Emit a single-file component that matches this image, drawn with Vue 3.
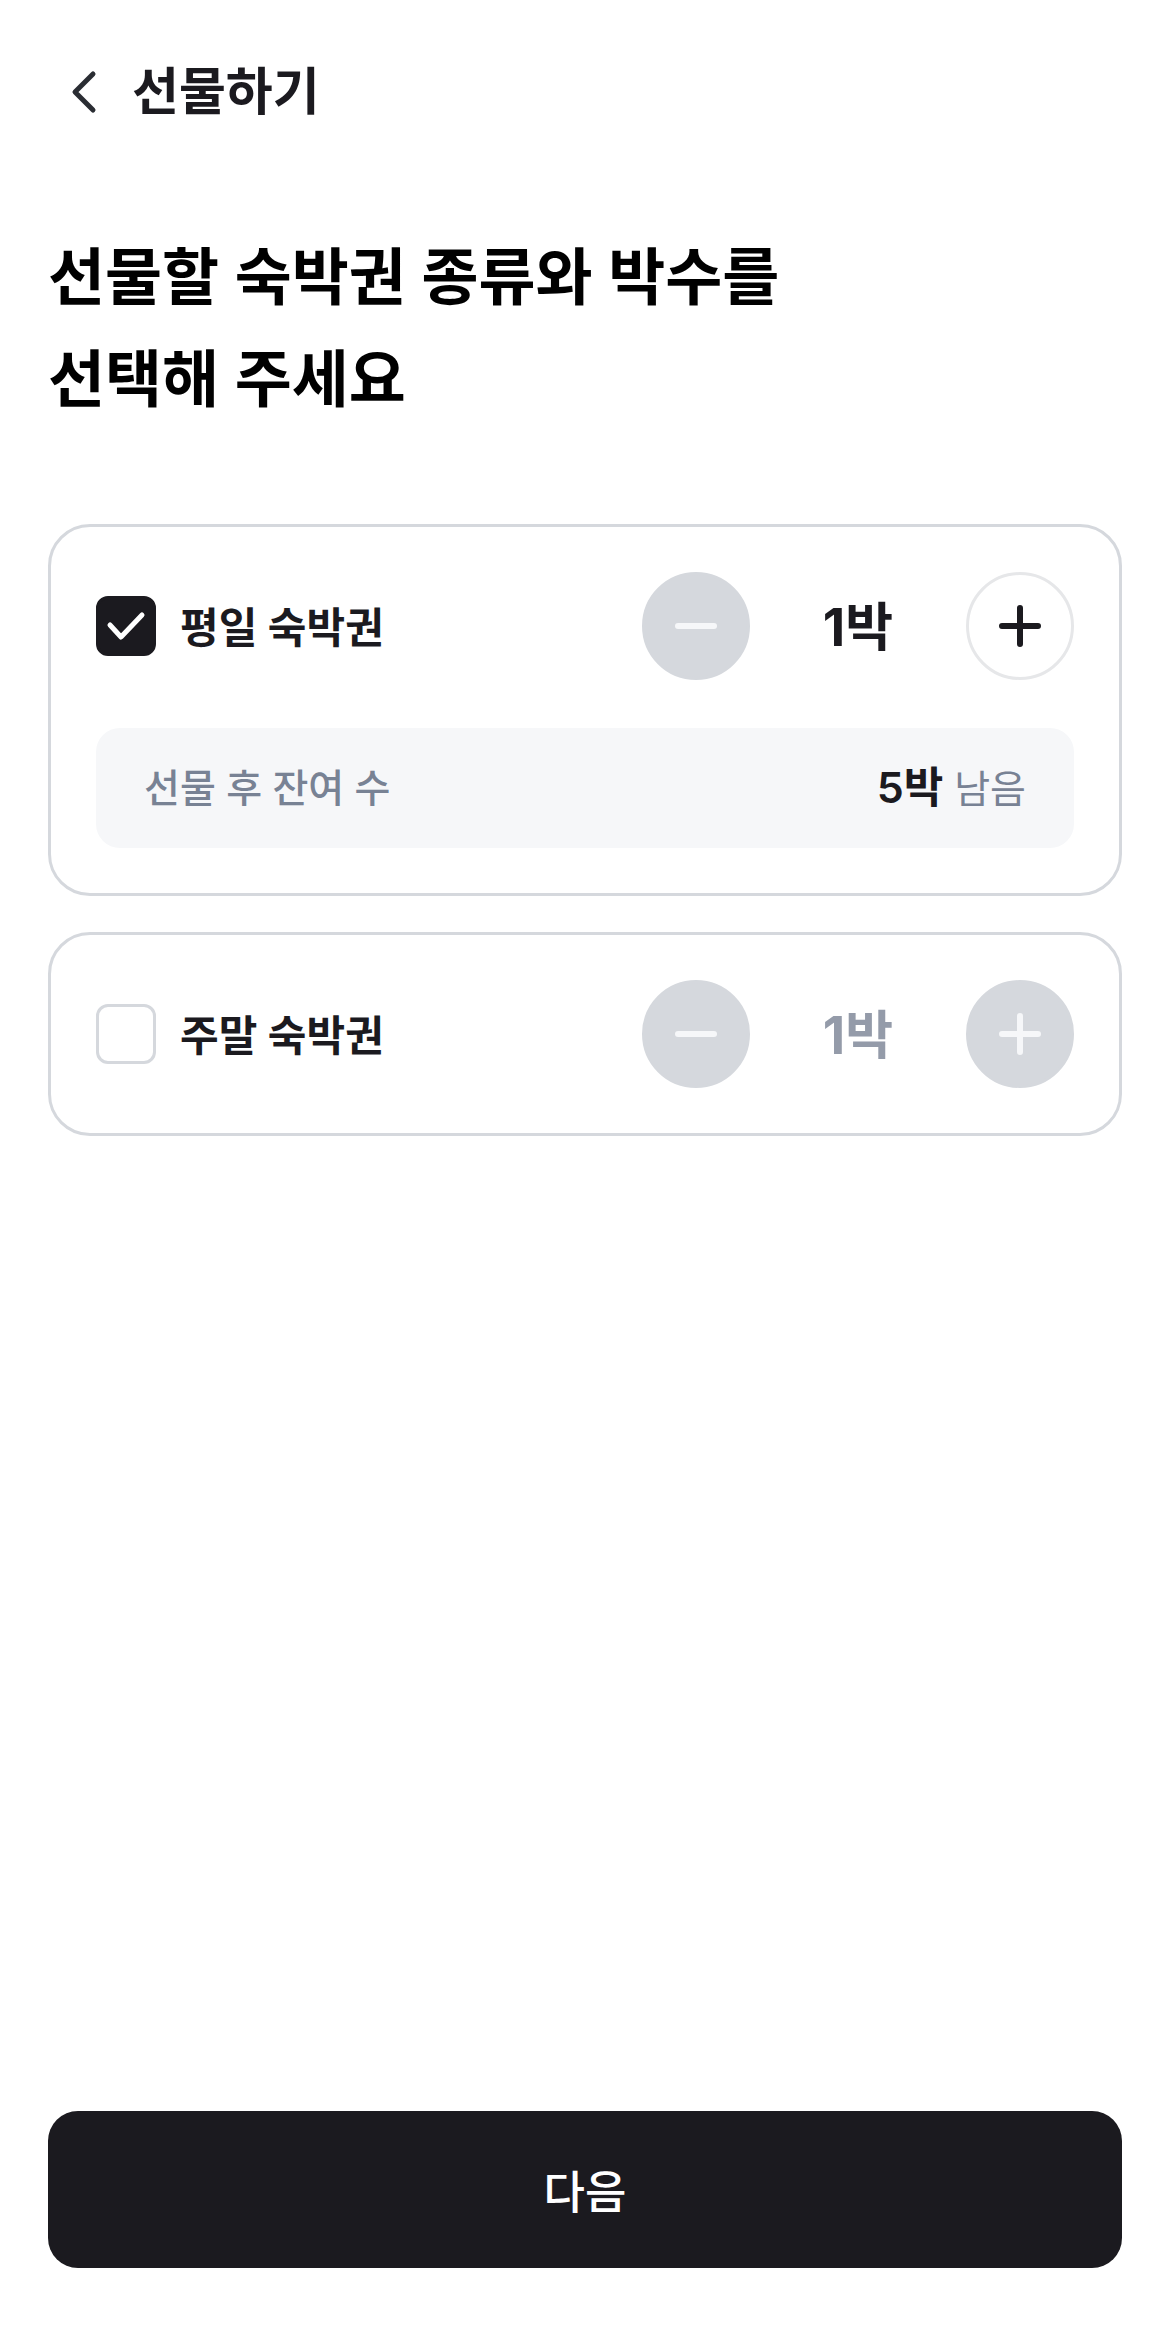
<script setup>
import { ref } from 'vue';

const tickets = ref([
    { id: 'weekday', name: '평일 숙박권', checked: true, count: 1, total: 6 },
    { id: 'weekend', name: '주말 숙박권', checked: false, count: 1, total: 4 },
]);

const canMinus = (ticket) => ticket.checked && ticket.count > 1;
const canPlus = (ticket) => ticket.checked && ticket.count < ticket.total;
</script>

<template>
    <div class="page">
        <header class="top-bar">
            <button type="button" class="back-btn" aria-label="뒤로">
                <svg viewBox="0 0 72 72" fill="none">
                    <path d="M45 18L27 36L45 54" />
                </svg>
            </button>
            <span class="top-title">선물하기</span>
        </header>

        <main class="content">
            <h1>선물할 숙박권 종류와 박수를<br>선택해 주세요</h1>
            <section v-for="ticket in tickets" :key="ticket.id" class="card">
                <div class="card-row">
                    <span class="check">
                        <input :id="ticket.id" v-model="ticket.checked" type="checkbox">
                        <svg v-if="ticket.checked" viewBox="0 0 60 60" fill="none">
                            <path d="M14 29L25 41L46 19" />
                        </svg>
                    </span>
                    <label :for="ticket.id">{{ ticket.name }}</label>
                    <div class="stepper">
                        <button type="button" aria-label="빼기" :disabled="!canMinus(ticket)" @click="ticket.count--">
                            <svg viewBox="0 0 48 48" fill="none">
                                <path d="M6 24H42" />
                            </svg>
                        </button>
                        <output :class="{ off: !ticket.checked }">{{ ticket.count }}박</output>
                        <button type="button" aria-label="더하기" :disabled="!canPlus(ticket)" @click="ticket.count++">
                            <svg viewBox="0 0 48 48" fill="none">
                                <path d="M6 24H42M24 6V42" />
                            </svg>
                        </button>
                    </div>
                </div>
                <div v-if="ticket.checked" class="remain">
                    <span>선물 후 잔여 수</span>
                    <span class="remain-value"><b>{{ ticket.total - ticket.count }}박</b> 남음</span>
                </div>
            </section>
        </main>

        <footer class="bottom">
            <button type="button" class="next-btn">다음</button>
        </footer>
    </div>
</template>

<style>
body {
    background: #fff;
}
</style>

<style scoped>
.page {
    display: flex;
    flex-direction: column;
    box-sizing: border-box;
    min-height: 100vh;
    padding: 0 48px;
    color: #1b1a1f;
    font-family: Inter, "Noto Sans CJK KR", sans-serif;
}
button {
    padding: 0;
    border: 0;
    font-family: inherit;
    cursor: pointer;
}
.top-bar {
    display: flex;
    align-items: center;
    height: 184px;
}
.back-btn {
    width: 72px;
    height: 72px;
    background: none;
}
.back-btn svg {
    display: block;
    stroke: #2a2d33;
    stroke-width: 5;
    stroke-linecap: round;
    stroke-linejoin: round;
}
.top-title {
    margin-left: 12px;
    font-size: 51px;
    font-weight: 600;
    line-height: 72px;
}
.content {
    display: flex;
    flex-direction: column;
    gap: 36px;
}
h1 {
    margin: 43px 0 57px;
    color: #000;
    font-size: 62px;
    font-weight: 600;
    line-height: 102px;
}
.card {
    padding: 45px;
    border: 3px solid #d5d8dd;
    border-radius: 42px;
}
.card-row {
    display: flex;
    align-items: center;
}
.check {
    display: grid;
    width: 60px;
    height: 60px;
    margin-right: 24px;
}
.check input,
.check svg {
    grid-area: 1 / 1;
}
.check input {
    box-sizing: border-box;
    width: 60px;
    height: 60px;
    margin: 0;
    appearance: none;
    border: 3px solid #d5d8dd;
    border-radius: 12px;
}
.check input:checked {
    border-color: #1b1a1f;
    background: #1b1a1f;
}
.check svg {
    pointer-events: none;
    stroke: #fff;
    stroke-width: 5;
    stroke-linecap: round;
    stroke-linejoin: round;
}
label {
    padding-top: 4px;
    font-size: 42px;
    font-weight: 600;
    line-height: 60px;
}
.stepper {
    display: flex;
    align-items: center;
    margin-left: auto;
}
.stepper button {
    display: grid;
    place-items: center;
    box-sizing: border-box;
    width: 108px;
    height: 108px;
    border: 3px solid #e6e7e9;
    border-radius: 50%;
    background: #fff;
    color: #1b1a1f;
}
.stepper button:disabled {
    border-color: #d5d8dd;
    background: #d5d8dd;
    color: #f6f7f9;
    cursor: default;
}
.stepper svg {
    width: 48px;
    height: 48px;
    stroke: currentColor;
    stroke-width: 6;
    stroke-linecap: round;
}
output {
    width: 216px;
    padding-top: 4px;
    font-size: 52px;
    font-weight: 700;
    line-height: 72px;
    text-align: center;
}
output.off {
    color: #949ba9;
}
.remain {
    display: flex;
    align-items: center;
    justify-content: space-between;
    height: 120px;
    margin-top: 48px;
    padding: 0 48px;
    border-radius: 24px;
    background: #f6f7f9;
    color: #788294;
    font-size: 39px;
    font-weight: 500;
    line-height: 60px;
}
.remain-value {
    font-weight: 400;
}
.remain b {
    color: #1b1a1f;
    font-size: 43px;
    font-weight: 600;
}
.bottom {
    margin-top: auto;
    padding: 48px 0 65px;
}
.next-btn {
    display: block;
    width: 100%;
    height: 157px;
    border-radius: 30px;
    background: #1b1a1f;
    color: #fff;
    font-size: 45px;
    font-weight: 500;
}
</style>
